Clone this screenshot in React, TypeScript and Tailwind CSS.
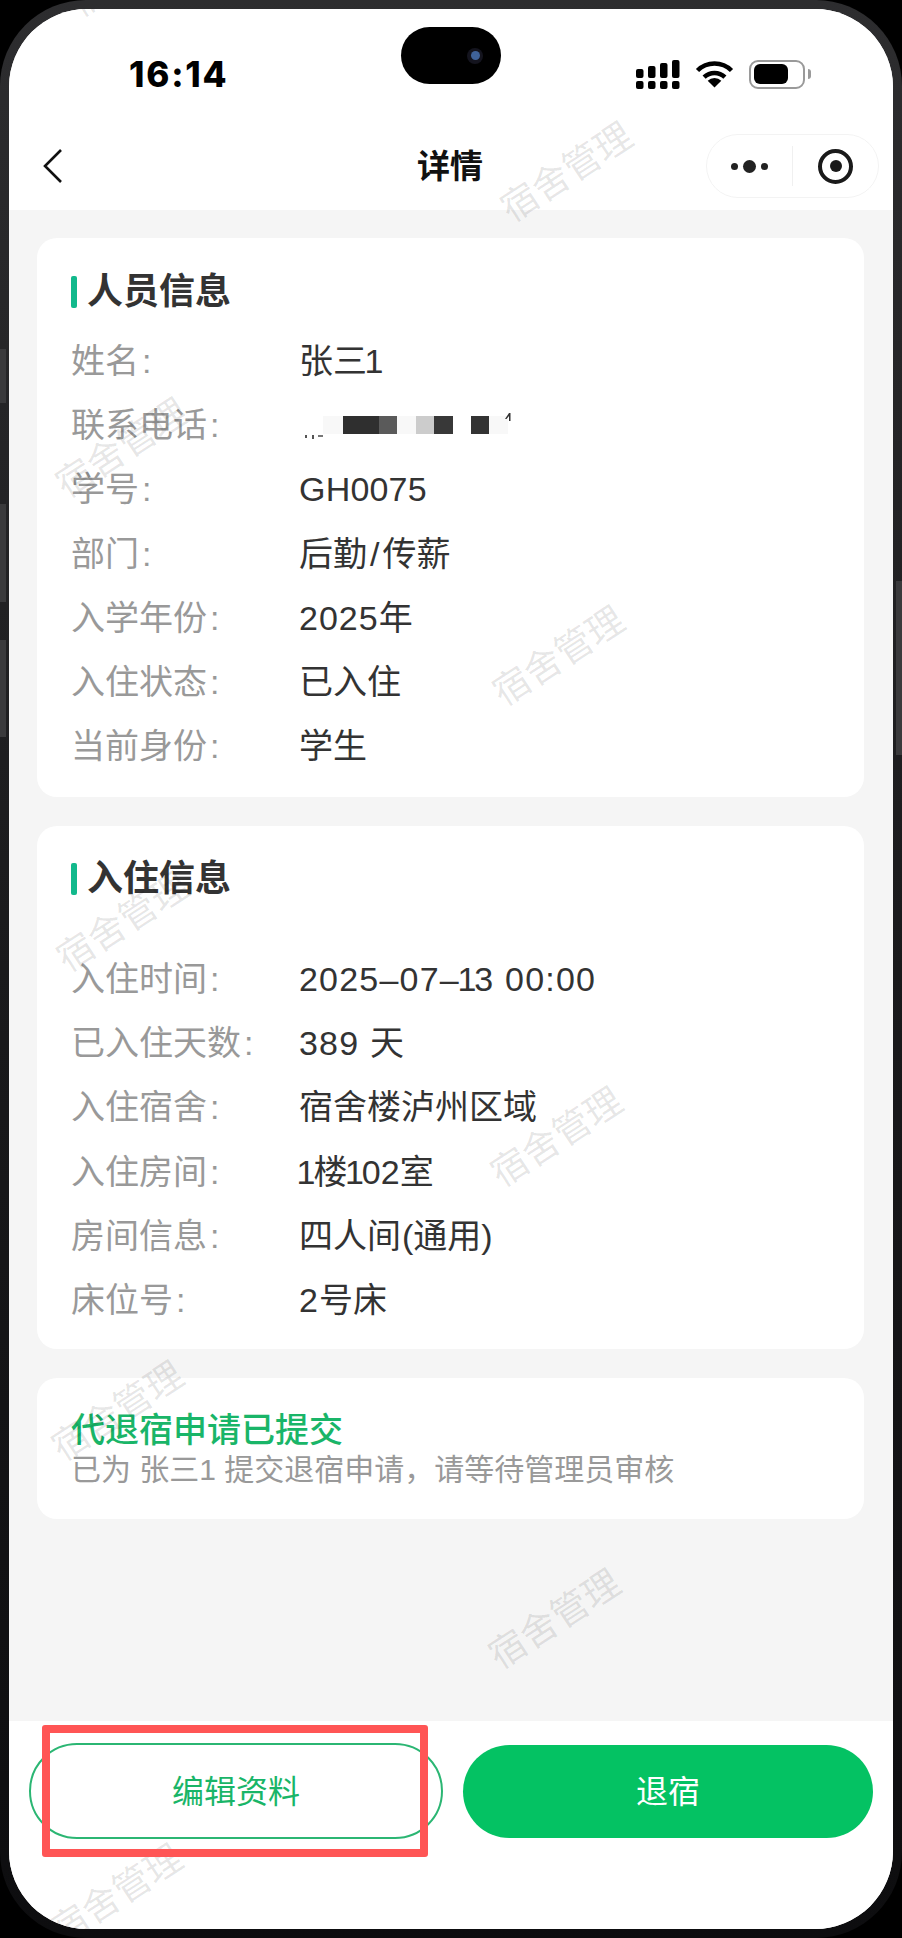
import type { ReactNode } from "react";

const FONT = "font-['Liberation_Sans','Noto_Sans_CJK_SC',sans-serif]";

const marks = [
  "left-[126px] top-[-41px]",
  "left-[558px] top-[164px]",
  "left-[113px] top-[440px]",
  "left-[550px] top-[648px]",
  "left-[114px] top-[914px]",
  "left-[548px] top-[1129px]",
  "left-[109px] top-[1403px]",
  "left-[546px] top-[1611px]",
  "left-[108px] top-[1886px]",
];

function Row({ label, children }: { label: string; children: ReactNode }) {
  return (
    <div className="flex h-[64.2px] items-center text-[34px] leading-[44px]">
      <div className="w-[228px] shrink-0 text-[#999999]">
        {label}
        <span className="ml-[3px]">:</span>
      </div>
      {children}
    </div>
  );
}

function Value({ children }: { children: ReactNode }) {
  return <div className="whitespace-pre text-[#333333]">{children}</div>;
}

function One() {
  return <span className="ml-[-2.5px] tracking-[-2px]">1</span>;
}

function CardTitle({ children }: { children: string }) {
  return (
    <div className="flex h-[44px] items-center gap-[10px]">
      <div className="h-[32px] w-[6px] rounded-[2px] bg-[#12b98c]" />
      <div className="text-[36px] font-semibold leading-[44px] text-[#333333]">{children}</div>
    </div>
  );
}

function PhoneMosaic() {
  return (
    <svg width="215" height="40" viewBox="0 0 215 40">
      <rect x="24" y="11" width="20" height="18" fill="#f8f8f8" />
      <rect x="44" y="11" width="36" height="18" fill="#2f2f2f" />
      <rect x="80" y="11" width="18" height="18" fill="#5a5a5a" />
      <rect x="98" y="11" width="19" height="18" fill="#f8f8f8" />
      <rect x="117" y="11" width="18" height="18" fill="#cccccc" />
      <rect x="135" y="11" width="19" height="18" fill="#383838" />
      <rect x="172" y="11" width="18" height="18" fill="#333333" />
      <rect x="190" y="11" width="19" height="18" fill="#f8f8f8" />
      <path d="M206 14l4-6h1.5v8h-1.5v-5l-2.5 3z" fill="#333333" />
      <rect x="6" y="30" width="2" height="3" fill="#555555" />
      <rect x="13" y="30" width="2" height="4" fill="#555555" />
      <rect x="19" y="30" width="5" height="2" fill="#777777" />
    </svg>
  );
}

export default function App() {
  return (
    <div className={`relative h-[1938px] w-[902px] overflow-hidden bg-black ${FONT}`}>
      <div className="absolute left-0 top-[349px] z-10 h-[54px] w-[6px] bg-[#3a3a3c]" />
      <div className="absolute left-0 top-[504px] z-10 h-[98px] w-[6px] bg-[#3a3a3c]" />
      <div className="absolute left-0 top-[640px] z-10 h-[97px] w-[6px] bg-[#3a3a3c]" />
      <div className="absolute right-0 top-[581px] z-10 h-[174px] w-[6px] bg-[#3a3a3c]" />

      <div className="h-full w-full rounded-[86px] bg-gradient-to-b from-[#2d2d2f] via-[#1a1a1c] to-[#0d0d0f] p-[9px]">
        <div className="relative flex h-full w-full flex-col overflow-hidden rounded-[78px] bg-[#f5f5f5]">
          {/* header */}
          <div className="bg-white pb-[12px] pt-[40px]">
            <div className="flex h-[50px] items-center justify-between pl-[120px] pr-[82px]">
              <div className="font-['Inter',sans-serif] text-[35px] font-extrabold leading-[50px] tracking-[1.8px] text-black">16:14</div>
              <div className="flex items-center gap-[15px]">
                <svg width="44" height="30" viewBox="0 0 44 30" fill="#000000">
                  <rect x="0" y="10" width="7.5" height="9" rx="2" />
                  <rect x="12" y="7" width="7.5" height="12" rx="2" />
                  <rect x="24" y="4" width="7.5" height="15" rx="2" />
                  <rect x="36" y="1" width="7.5" height="18" rx="2" />
                  <rect x="0" y="22" width="7.5" height="8" rx="2" />
                  <rect x="12" y="22" width="7.5" height="8" rx="2" />
                  <rect x="24" y="22" width="7.5" height="8" rx="2" />
                  <rect x="36" y="22" width="7.5" height="8" rx="2" />
                </svg>
                <svg width="39" height="28" viewBox="0 0 39 28">
                  <path d="M19.5 27.5L12.7 20.7A9.6 9.6 0 0 1 26.3 20.7Z" fill="#000000" />
                  <path d="M9.1 17.1A15 15 0 0 1 29.9 17.1" stroke="#000000" strokeWidth="4.5" fill="none" />
                  <path d="M2.5 10.5A24 24 0 0 1 36.5 10.5" stroke="#000000" strokeWidth="4.5" fill="none" />
                </svg>
                <div className="flex items-center gap-[3px]">
                  <div className="flex h-[29px] w-[56px] items-center rounded-[9px] border-2 border-[#9a9a9a] p-[3px]">
                    <div className="h-[20px] w-[34px] rounded-[6px] bg-black" />
                  </div>
                  <div className="h-[10px] w-[3px] rounded-r-[3px] bg-[#9a9a9a]" />
                </div>
              </div>
            </div>
            <div className="mt-[35px] grid h-[64px] grid-cols-[374px_auto_1fr] items-center pl-[34px] pr-[14px]">
              <svg width="20" height="34" viewBox="0 0 20 34" fill="none">
                <path d="M18 1L2 17L18 33" stroke="#111111" strokeWidth="2.6" />
              </svg>
              <div className="mt-[2px] text-[33px] font-bold leading-[44px] text-[#111111]">详情</div>
              <div className="flex h-[64px] w-[173px] items-center justify-self-end rounded-full border border-[#f3f3f3]">
                <div className="flex h-[40px] w-[86px] items-center justify-center gap-[5px] border-r border-[#f0f0f0]">
                  <span className="h-[7px] w-[7px] rounded-full bg-[#222222]" />
                  <span className="h-[13px] w-[13px] rounded-full bg-[#222222]" />
                  <span className="h-[7px] w-[7px] rounded-full bg-[#222222]" />
                </div>
                <div className="flex flex-1 items-center justify-center">
                  <div className="flex h-[35px] w-[35px] items-center justify-center rounded-full border-[4px] border-[#1a1a1a]">
                    <div className="h-[12px] w-[12px] rounded-full bg-[#1a1a1a]" />
                  </div>
                </div>
              </div>
            </div>
          </div>

          {/* content */}
          <div className="flex flex-1 flex-col gap-[29px] pl-[28px] pr-[29px] pt-[28px]">
            <div className="h-[559px] rounded-[20px] bg-white pl-[34px] pr-[30px] pt-[32px]">
              <CardTitle>人员信息</CardTitle>
              <div className="mt-[15px]">
                <Row label="姓名"><Value>张三<One /></Value></Row>
                <Row label="联系电话">
                  <PhoneMosaic />
                </Row>
                <Row label="学号"><Value><span className="tracking-[0.2px]">GH0075</span></Value></Row>
                <Row label="部门"><Value>后勤<span className="mx-[3px]">/</span>传薪</Value></Row>
                <Row label="入学年份"><Value><span className="tracking-[1px]">2025</span>年</Value></Row>
                <Row label="入住状态"><Value>已入住</Value></Row>
                <Row label="当前身份"><Value>学生</Value></Row>
              </div>
            </div>

            <div className="h-[523px] rounded-[20px] bg-white pl-[34px] pr-[30px] pt-[31px]">
              <CardTitle>入住信息</CardTitle>
              <div className="mt-[46px]">
                <Row label="入住时间">
                  <Value><span className="tracking-[1.2px]">2025–07–</span><One /><span className="tracking-[1.2px]">3 00:00</span></Value>
                </Row>
                <Row label="已入住天数"><Value><span className="tracking-[1.2px]">389 </span>天</Value></Row>
                <Row label="入住宿舍"><Value>宿舍楼泸州区域</Value></Row>
                <Row label="入住房间"><Value><One />楼<One /><span>02</span>室</Value></Row>
                <Row label="房间信息"><Value>四人间<span className="ml-[1px]">(</span>通用<span className="mr-[1px]">)</span></Value></Row>
                <Row label="床位号"><Value><span className="tracking-[1px]">2</span>号床</Value></Row>
              </div>
            </div>

            <div className="h-[141px] rounded-[20px] bg-white pl-[34px] pr-[30px] pt-[32px]">
              <div className="text-[34px] font-medium leading-[40px] text-[#19b568]">代退宿申请已提交</div>
              <div className="text-[30px] leading-[40px] text-[#999999]">已为 张三1 提交退宿申请，请等待管理员审核</div>
            </div>
          </div>

          {/* bottom bar */}
          <div className="flex h-[208px] gap-[20px] bg-white pl-[20px] pr-[20px] pt-[22px]">
            <div className="flex h-[96px] w-[414px] items-center justify-center rounded-full border-2 border-[#2bb673] pt-[2px] text-[32px] text-[#19b568]">
              编辑资料
            </div>
            <div className="mt-[2px] flex h-[93px] flex-1 items-center justify-center self-start rounded-full bg-[#04c263] text-[32px] text-white">
              退宿
            </div>
          </div>

          {/* dynamic island */}
          <div className="absolute left-[392px] top-[18px] flex h-[57px] w-[100px] items-center justify-end rounded-full bg-black pr-[18px]">
            <div className="flex h-[16px] w-[16px] items-center justify-center rounded-full bg-[#14141e]">
              <div className="h-[9px] w-[9px] rounded-full bg-[#3f6299]" />
            </div>
          </div>

          {/* watermarks */}
          {marks.map((m) => (
            <div
              key={m}
              className={`pointer-events-none absolute -translate-x-1/2 -translate-y-1/2 -rotate-[33deg] whitespace-nowrap text-[37px] leading-[40px] text-black/10 ${m}`}
            >
              宿舍管理
            </div>
          ))}

          {/* annotation */}
          <div className="pointer-events-none absolute left-[33px] top-[1716px] h-[132px] w-[386px] rounded-[3px] border-[8px] border-[#ff5555]" />
        </div>
      </div>
    </div>
  );
}
